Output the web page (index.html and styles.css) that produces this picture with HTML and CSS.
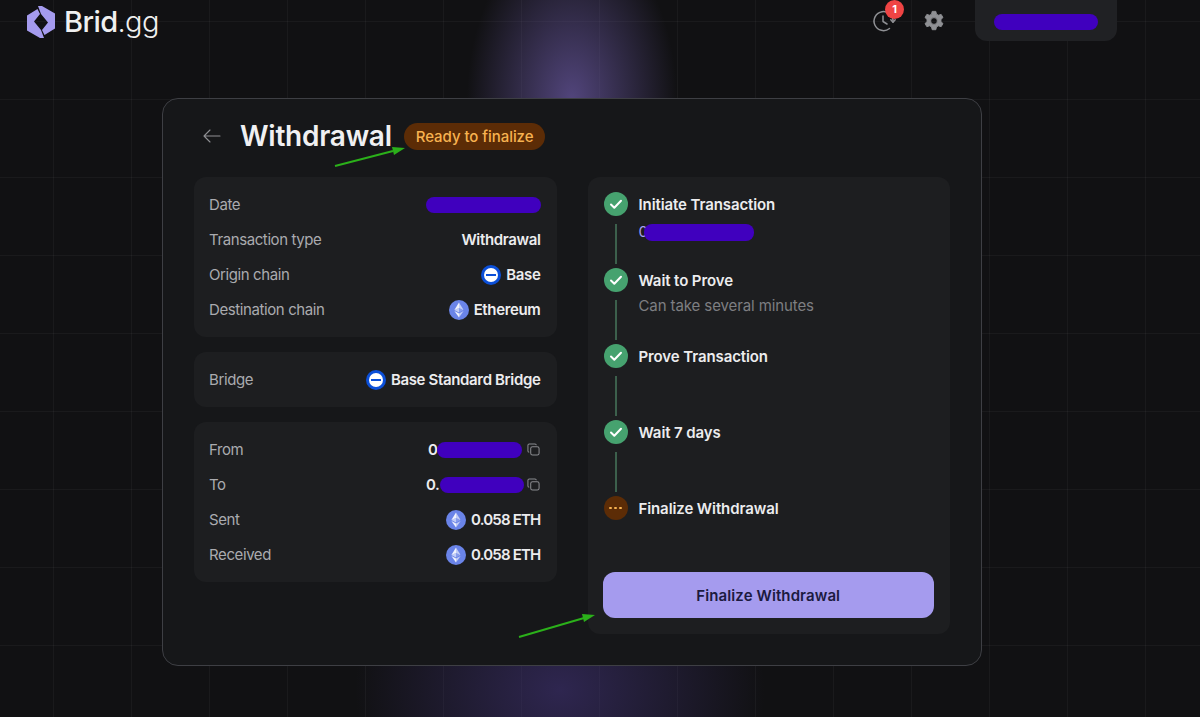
FILE: index.html
```html
<!DOCTYPE html>
<html lang="en">
<head>
  <meta charset="UTF-8" />
  <title>Brid.gg - Withdrawal</title>
  <link rel="stylesheet" href="styles.css">
</head>

<body>
  <svg class="defs" width="0" height="0">
    <symbol id="eth" viewBox="0 0 20 20">
      <circle cx="10" cy="10" r="10" fill="#6a84e8"/>
      <path d="M10 2.5v5.6l4.6 2z" fill="#fff" fill-opacity=".6"/>
      <path d="M10 2.5 5.4 10.1l4.6-2z" fill="#fff" fill-opacity=".9"/>
      <path d="M10 13.5v3.9l4.6-6.4z" fill="#fff" fill-opacity=".6"/>
      <path d="M10 13.5v3.9L5.4 11z" fill="#fff" fill-opacity=".9"/>
      <path d="M10 12.6l4.6-2.5L10 8.1z" fill="#fff" fill-opacity=".2"/>
      <path d="M5.4 10.1l4.6 2.5V8.1z" fill="#fff" fill-opacity=".6"/>
    </symbol>
    <symbol id="base" viewBox="0 0 20 20">
      <circle cx="10" cy="10" r="10" fill="#0b4fd8"/>
      <circle cx="10" cy="10" r="7" fill="#fff"/>
      <rect x="5" y="9" width="10" height="2" fill="#0b4fd8"/>
    </symbol>
    <symbol id="copy" viewBox="0 0 14 14">
      <rect x="4" y="4" width="9" height="9" rx="2" fill="none" stroke="#8a8b8f" stroke-width="1.1"/>
      <path d="M10 2.5v-.1A1.4 1.4 0 0 0 8.6 1H2.4A1.4 1.4 0 0 0 1 2.4v6.2A1.4 1.4 0 0 0 2.4 10" fill="none" stroke="#8a8b8f" stroke-width="1.1"/>
    </symbol>
    <symbol id="check" viewBox="0 0 24 24">
      <circle cx="12" cy="12" r="12" fill="#46a26f"/>
      <path d="M7 12.5l3.3 3.3L17 8.8" fill="none" stroke="#fff" stroke-width="2" stroke-linecap="round" stroke-linejoin="round"/>
    </symbol>
  </svg>

  <header class="topbar">
    <div class="logo">
      <svg class="logo-mark" viewBox="0 0 28 32" width="28" height="32">
        <path d="M11 0h4l13 7.5v15L17.500 29 15 24l6-7.500L14 8z" fill="#a59bee"/>
        <path d="M17 32h-4L0 24.500v-15L10.500 3 13 8l-6 7.500L14 24z" fill="#a59bee"/>
      </svg>
      <span class="logo-name">Brid<span class="logo-tld">.gg</span></span>
    </div>

    <div class="top-actions">
      <div class="history">
        <svg viewBox="0 0 24 24" width="24" height="24" fill="none" stroke="#8f9094" stroke-width="1.5" stroke-linecap="round" stroke-linejoin="round">
          <path d="M21 13A9.500 9.500 0 1 0 17.500 19.500"/>
          <path d="M11 7v5.500l4 2.500"/>
          <path d="M18.800 10.800l2.200 2.400 2.200-2.400"/>
        </svg>
        <span class="badge-count">1</span>
      </div>
      <svg class="gear" viewBox="0 0 24 24" width="22" height="22">
        <path fill="#8f9094" stroke="#8f9094" stroke-linejoin="round" fill-rule="evenodd" d="M10 1.500h4l.7 3 2.100 1.200 3-.9 2 3.400-2.200 2.100v2.400l2.200 2.100-2 3.400-3-.9-2.100 1.200-.7 3h-4l-.7-3-2.100-1.200-3 .9-2-3.400 2.200-2.100v-2.400L2.200 8.200l2-3.400 3 .9 2.100-1.200zM12 8.300a3.700 3.700 0 1 0 0 7.400 3.700 3.700 0 0 0 0-7.400z"/>
      </svg>
      <div class="wallet"><span class="redact wallet-redact"></span></div>
    </div>
  </header>

  <main class="card">
    <div class="card-head">
      <svg class="back" viewBox="0 0 18 14" width="18" height="14" fill="none" stroke="#8f9094" stroke-width="1.1" stroke-linecap="round" stroke-linejoin="round">
        <path d="M17 7H1M7 1L1 7l6 6"/>
      </svg>
      <h1>Withdrawal</h1>
      <span class="status">Ready to finalize</span>
    </div>

    <div class="columns">
      <div class="left-col">
        <section class="panel">
          <div class="row"><span class="label">Date</span><span class="value"><span class="redact date-redact"></span></span></div>
          <div class="row"><span class="label">Transaction type</span><span class="value">Withdrawal</span></div>
          <div class="row"><span class="label">Origin chain</span><span class="value"><svg class="coin"><use href="#base"/></svg>Base</span></div>
          <div class="row"><span class="label">Destination chain</span><span class="value"><svg class="coin"><use href="#eth"/></svg>Ethereum</span></div>
        </section>

        <section class="panel">
          <div class="row"><span class="label">Bridge</span><span class="value"><svg class="coin"><use href="#base"/></svg>Base Standard Bridge</span></div>
        </section>

        <section class="panel">
          <div class="row"><span class="label">From</span><span class="value"><span class="addr">0<span class="redact addr-redact"></span></span><svg class="copy"><use href="#copy"/></svg></span></div>
          <div class="row"><span class="label">To</span><span class="value"><span class="addr addr-to">0.<span class="redact addr-redact"></span></span><svg class="copy"><use href="#copy"/></svg></span></div>
          <div class="row"><span class="label">Sent</span><span class="value amount"><svg class="coin"><use href="#eth"/></svg>0.058 ETH</span></div>
          <div class="row"><span class="label">Received</span><span class="value amount"><svg class="coin"><use href="#eth"/></svg>0.058 ETH</span></div>
        </section>
      </div>

      <section class="panel steps-panel">
        <ol class="steps">
          <li class="step">
            <div class="step-rail"><svg class="step-icon"><use href="#check"/></svg><span class="step-line"></span></div>
            <div class="step-text"><div class="step-title">Initiate Transaction</div><div class="step-sub tx">0<span class="redact tx-redact"></span></div></div>
          </li>
          <li class="step">
            <div class="step-rail"><svg class="step-icon"><use href="#check"/></svg><span class="step-line"></span></div>
            <div class="step-text"><div class="step-title">Wait to Prove</div><div class="step-sub">Can take several minutes</div></div>
          </li>
          <li class="step">
            <div class="step-rail"><svg class="step-icon"><use href="#check"/></svg><span class="step-line"></span></div>
            <div class="step-text"><div class="step-title">Prove Transaction</div></div>
          </li>
          <li class="step">
            <div class="step-rail"><svg class="step-icon"><use href="#check"/></svg><span class="step-line"></span></div>
            <div class="step-text"><div class="step-title">Wait 7 days</div></div>
          </li>
          <li class="step step-last">
            <div class="step-rail"><span class="step-pending"><i></i><i></i><i></i></span></div>
            <div class="step-text"><div class="step-title">Finalize Withdrawal</div></div>
          </li>
        </ol>
        <button class="finalize">Finalize Withdrawal</button>
      </section>
    </div>
  </main>

  <!-- green arrows drawn over the shot -->
  <svg class="marks" viewBox="0 0 1200 717" width="1200" height="717">
    <path d="M335 166L393 151" stroke="#2bb01a" stroke-width="2" fill="none"/>
    <path d="M405 148l-13-1 2 8z" fill="#2bb01a"/>
    <path d="M519 637L584 618" stroke="#2bb01a" stroke-width="2" fill="none"/>
    <path d="M595 615l-13-1 2 8z" fill="#2bb01a"/>
  </svg>
</body>
</html>
```

FILE: styles.css
```css
* {
  box-sizing: border-box;
  margin: 0;
  padding: 0;
  font-family: Inter, "Liberation Sans", sans-serif;
}

html, body {
  height: 717px;
  overflow: hidden;
}

body {
  position: relative;
  background-color: rgb(17, 17, 19);
  background-image:
    radial-gradient(ellipse 105px 170px at 572px 100px, rgba(98, 82, 150, 0.8), rgba(98, 82, 150, 0)),
    radial-gradient(ellipse 205px 170px at 560px 690px, rgba(66, 52, 120, 0.6), rgba(66, 52, 120, 0)),
    linear-gradient(to right, rgba(255, 255, 255, 0.04) 1px, transparent 1px),
    linear-gradient(to bottom, rgba(255, 255, 255, 0.04) 1px, transparent 1px);
  background-size: auto, auto, 78px 78px, 78px 78px;
  background-position: 0 0, 0 0, 53px 21px, 53px 21px;
  color: rgb(240, 240, 242);
}

.defs {
  position: absolute;
}

.topbar {
  display: flex;
  justify-content: space-between;
  align-items: flex-start;
  height: 98px;
  padding-left: 27px;
  padding-right: 83px;
}

.logo {
  display: flex;
  align-items: center;
  gap: 9px;
  padding-top: 4px;
}

.logo-name {
  font-size: 29px;
  font-weight: 500;
  letter-spacing: -0.6px;
  color: rgb(240, 240, 240);
}

.logo-tld {
  font-weight: 300;
}

.top-actions {
  display: flex;
  align-items: flex-start;
}

.history {
  position: relative;
  width: 24px;
  height: 24px;
  margin-top: 9px;
}

.badge-count {
  position: absolute;
  top: -9px;
  left: 13px;
  width: 19px;
  height: 19px;
  border-radius: 50%;
  background-color: rgb(239, 68, 68);
  color: white;
  font-size: 11px;
  font-weight: 700;
  line-height: 19px;
  text-align: center;
}

.gear {
  margin-top: 10px;
  margin-left: 27px;
}

.wallet {
  display: flex;
  align-items: center;
  justify-content: center;
  width: 142px;
  height: 41px;
  margin-left: 30px;
  border-radius: 0 0 12px 12px;
  background-color: rgb(32, 33, 36);
}

.redact {
  display: inline-block;
  height: 16px;
  border-radius: 8px;
  background-color: rgb(64, 0, 190);
}

.wallet-redact {
  width: 104px;
  margin-top: 3px;
}

.card {
  width: 820px;
  height: 568px;
  margin-left: 162px;
  padding: 19px 31px 31px;
  border: 1px solid rgb(62, 63, 68);
  border-radius: 16px;
  background-color: rgb(22, 23, 25);
}

.card-head {
  display: flex;
  align-items: center;
  height: 36px;
  margin-bottom: 23px;
}

.back {
  margin-left: 9px;
}

h1 {
  margin-left: 19px;
  font-size: 28px;
  font-weight: 600;
  letter-spacing: -0.25px;
}

.status {
  margin-left: 12px;
  padding: 5px 12px;
  border-radius: 14px;
  background-color: rgb(92, 44, 6);
  color: rgb(247, 178, 80);
  font-size: 15px;
  font-weight: 500;
  line-height: 17px;
  letter-spacing: -0.05px;
}

.columns {
  display: grid;
  grid-template-columns: 1fr 1fr;
  gap: 31px;
}

.left-col {
  display: flex;
  flex-direction: column;
  gap: 15px;
}

.panel {
  display: flex;
  flex-direction: column;
  gap: 15px;
  padding: 17.5px 16px 17.5px 15px;
  border-radius: 12px;
  background-color: rgb(29, 30, 32);
}

.row {
  display: flex;
  justify-content: space-between;
  align-items: center;
  height: 20px;
  font-size: 15px;
  letter-spacing: -0.4px;
}

.label {
  color: rgb(170, 171, 175);
}

.value {
  display: flex;
  align-items: center;
  gap: 5px;
  font-weight: 600;
  letter-spacing: -0.35px;
  color: rgb(236, 236, 238);
}

.amount {
  letter-spacing: -0.8px;
}

.coin {
  width: 20px;
  height: 20px;
}

.copy {
  width: 13px;
  height: 13px;
  margin-right: 1px;
}

.addr {
  display: flex;
  align-items: center;
}

.addr-to {
  margin-right: -2px;
}

.addr-redact {
  width: 85px;
  margin-left: -1px;
}

.addr-to .addr-redact {
  width: 84px;
  margin-left: 0;
}

.date-redact {
  width: 115px;
}

.steps-panel {
  gap: 0;
  padding: 15px 16px 16px 16px;
}

.steps {
  list-style: none;
}

.step {
  display: flex;
  gap: 11px;
  height: 76px;
}

.step-last {
  height: 24px;
}

.step-rail {
  display: flex;
  flex-direction: column;
  align-items: center;
  flex-shrink: 0;
  width: 24px;
}

.step-icon {
  width: 24px;
  height: 24px;
}

.step-line {
  width: 2px;
  height: 40px;
  margin-top: 8px;
  background-color: rgb(60, 96, 76);
}

.step-pending {
  display: flex;
  align-items: center;
  justify-content: center;
  gap: 2.5px;
  width: 24px;
  height: 24px;
  border-radius: 50%;
  background-color: rgb(92, 44, 6);
}

.step-pending i {
  width: 2.5px;
  height: 2.5px;
  border-radius: 50%;
  background-color: rgb(247, 178, 80);
}

.step-title {
  font-size: 15px;
  font-weight: 600;
  line-height: 26px;
  letter-spacing: -0.1px;
  color: rgb(236, 236, 238);
}

.step-sub {
  margin-top: 2px;
  font-size: 15px;
  line-height: 20px;
  letter-spacing: -0.1px;
  color: rgb(125, 126, 130);
}

.tx {
  display: flex;
  align-items: center;
  margin-top: 4px;
  color: rgb(170, 160, 240);
}

.tx-redact {
  width: 110px;
  height: 17px;
  margin-left: -4px;
}

.finalize {
  height: 46px;
  margin-top: 52px;
  margin-left: -1px;
  border: none;
  border-radius: 12px;
  background-color: rgb(165, 155, 238);
  color: rgb(28, 26, 64);
  font-size: 15px;
  font-weight: 600;
  letter-spacing: 0.1px;
  cursor: pointer;
}

.marks {
  position: absolute;
  top: 0;
  left: 0;
  pointer-events: none;
}
```
